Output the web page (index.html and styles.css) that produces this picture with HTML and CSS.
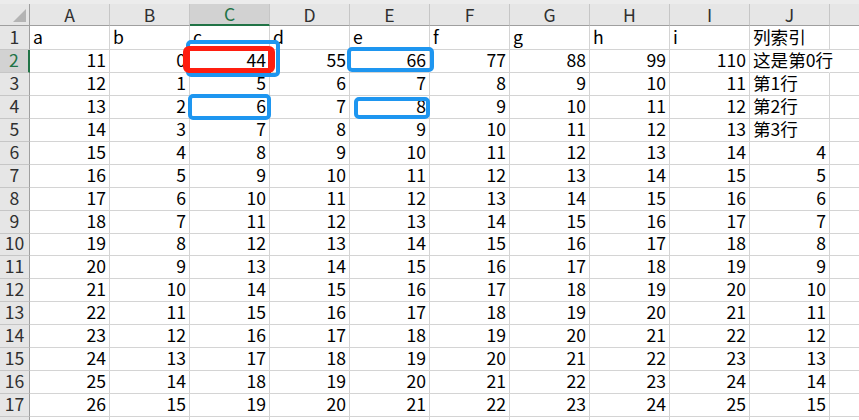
FILE: index.html
```html
<!DOCTYPE html>
<html lang="zh-CN">
<head>
<meta charset="utf-8">
<title>Sheet</title>
<link rel="stylesheet" href="styles.css">
</head>
<body>
<div class="sheet">
  <div class="strip"></div>

  <div class="corner"><span class="tri"></span></div>
  <div class="ch">A</div><div class="ch">B</div><div class="ch hs">C</div><div class="ch">D</div><div class="ch">E</div><div class="ch">F</div><div class="ch">G</div><div class="ch">H</div><div class="ch">I</div><div class="ch">J</div><div class="ch"></div>

  <div class="rh">1</div>
  <div class="c">a</div><div class="c">b</div><div class="c">c</div><div class="c">d</div><div class="c">e</div><div class="c">f</div><div class="c">g</div><div class="c">h</div><div class="c">i</div><div class="c">列索引</div><div class="c"></div>

  <div class="rh hs rsel">2</div>
  <div class="c n">11</div><div class="c n">0</div><div class="c n">44</div><div class="c n">55</div><div class="c n">66</div><div class="c n">77</div><div class="c n">88</div><div class="c n">99</div><div class="c n">110</div><div class="c ov">这是第0行</div><div class="c"></div>

  <div class="rh">3</div>
  <div class="c n">12</div><div class="c n">1</div><div class="c n">5</div><div class="c n">6</div><div class="c n">7</div><div class="c n">8</div><div class="c n">9</div><div class="c n">10</div><div class="c n">11</div><div class="c">第1行</div><div class="c"></div>

  <div class="rh">4</div>
  <div class="c n">13</div><div class="c n">2</div><div class="c n">6</div><div class="c n">7</div><div class="c n">8</div><div class="c n">9</div><div class="c n">10</div><div class="c n">11</div><div class="c n">12</div><div class="c">第2行</div><div class="c"></div>

  <div class="rh">5</div>
  <div class="c n">14</div><div class="c n">3</div><div class="c n">7</div><div class="c n">8</div><div class="c n">9</div><div class="c n">10</div><div class="c n">11</div><div class="c n">12</div><div class="c n">13</div><div class="c">第3行</div><div class="c"></div>

  <div class="rh">6</div>
  <div class="c n">15</div><div class="c n">4</div><div class="c n">8</div><div class="c n">9</div><div class="c n">10</div><div class="c n">11</div><div class="c n">12</div><div class="c n">13</div><div class="c n">14</div><div class="c n">4</div><div class="c"></div>

  <div class="rh">7</div>
  <div class="c n">16</div><div class="c n">5</div><div class="c n">9</div><div class="c n">10</div><div class="c n">11</div><div class="c n">12</div><div class="c n">13</div><div class="c n">14</div><div class="c n">15</div><div class="c n">5</div><div class="c"></div>

  <div class="rh">8</div>
  <div class="c n">17</div><div class="c n">6</div><div class="c n">10</div><div class="c n">11</div><div class="c n">12</div><div class="c n">13</div><div class="c n">14</div><div class="c n">15</div><div class="c n">16</div><div class="c n">6</div><div class="c"></div>

  <div class="rh">9</div>
  <div class="c n">18</div><div class="c n">7</div><div class="c n">11</div><div class="c n">12</div><div class="c n">13</div><div class="c n">14</div><div class="c n">15</div><div class="c n">16</div><div class="c n">17</div><div class="c n">7</div><div class="c"></div>

  <div class="rh">10</div>
  <div class="c n">19</div><div class="c n">8</div><div class="c n">12</div><div class="c n">13</div><div class="c n">14</div><div class="c n">15</div><div class="c n">16</div><div class="c n">17</div><div class="c n">18</div><div class="c n">8</div><div class="c"></div>

  <div class="rh">11</div>
  <div class="c n">20</div><div class="c n">9</div><div class="c n">13</div><div class="c n">14</div><div class="c n">15</div><div class="c n">16</div><div class="c n">17</div><div class="c n">18</div><div class="c n">19</div><div class="c n">9</div><div class="c"></div>

  <div class="rh">12</div>
  <div class="c n">21</div><div class="c n">10</div><div class="c n">14</div><div class="c n">15</div><div class="c n">16</div><div class="c n">17</div><div class="c n">18</div><div class="c n">19</div><div class="c n">20</div><div class="c n">10</div><div class="c"></div>

  <div class="rh">13</div>
  <div class="c n">22</div><div class="c n">11</div><div class="c n">15</div><div class="c n">16</div><div class="c n">17</div><div class="c n">18</div><div class="c n">19</div><div class="c n">20</div><div class="c n">21</div><div class="c n">11</div><div class="c"></div>

  <div class="rh">14</div>
  <div class="c n">23</div><div class="c n">12</div><div class="c n">16</div><div class="c n">17</div><div class="c n">18</div><div class="c n">19</div><div class="c n">20</div><div class="c n">21</div><div class="c n">22</div><div class="c n">12</div><div class="c"></div>

  <div class="rh">15</div>
  <div class="c n">24</div><div class="c n">13</div><div class="c n">17</div><div class="c n">18</div><div class="c n">19</div><div class="c n">20</div><div class="c n">21</div><div class="c n">22</div><div class="c n">23</div><div class="c n">13</div><div class="c"></div>

  <div class="rh">16</div>
  <div class="c n">25</div><div class="c n">14</div><div class="c n">18</div><div class="c n">19</div><div class="c n">20</div><div class="c n">21</div><div class="c n">22</div><div class="c n">23</div><div class="c n">24</div><div class="c n">14</div><div class="c"></div>

  <div class="rh">17</div>
  <div class="c n">26</div><div class="c n">15</div><div class="c n">19</div><div class="c n">20</div><div class="c n">21</div><div class="c n">22</div><div class="c n">23</div><div class="c n">24</div><div class="c n">25</div><div class="c n">15</div><div class="c"></div>

  <div class="rh last"></div>
  <div class="c"></div><div class="c"></div><div class="c"></div><div class="c"></div><div class="c"></div><div class="c"></div><div class="c"></div><div class="c"></div><div class="c"></div><div class="c"></div><div class="c"></div>

  <div class="active"><span class="handle"></span></div>
  <div class="mark blue b-c2"></div>
  <div class="mark red r-c2"></div>
  <div class="mark blue b-c4"></div>
  <div class="mark blue b-e2"></div>
  <div class="mark blue b-e4"></div>
</div>
</body>
</html>
```

FILE: styles.css
```css
html, body {
  margin: 0;
  padding: 0;
  background: #ffffff;
  overflow: hidden;
}

body {
  width: 859px;
  height: 420px;
}

.sheet {
  position: relative;
  display: grid;
  grid-template-columns: 30px repeat(11, 80px);
  grid-template-rows: 4px 22px 24px repeat(17, 22.94px);
  font-family: "Noto Sans CJK SC", "Noto Sans", sans-serif;
  font-size: 17.6px;
  color: #000000;
  width: 859px;
  height: 420px;
  overflow: hidden;
}

.strip {
  grid-column: 1 / -1;
  background: #ececec;
}

.corner {
  position: relative;
  background: #e6e6e6;
  border-right: 1px solid #9f9f9f;
  border-bottom: 1px solid #9f9f9f;
}

.tri {
  position: absolute;
  right: 3px;
  bottom: 3px;
  width: 0;
  height: 0;
  border-left: 13px solid transparent;
  border-bottom: 13px solid #b4b4b4;
}

.ch,
.rh,
.c {
  display: flex;
  align-items: flex-end;
  white-space: nowrap;
  box-sizing: border-box;
}

.ch {
  justify-content: center;
  line-height: 20px;
  background: #e6e6e6;
  color: #303030;
  border-right: 1px solid #c6c6c6;
  border-bottom: 1px solid #9f9f9f;
}

.rh {
  justify-content: center;
  line-height: 22px;
  background: #e6e6e6;
  color: #303030;
  border-right: 1px solid #9f9f9f;
  border-bottom: 1px solid #c6c6c6;
  padding-bottom: 1px;
}

.ch.hs {
  background: #d2d2d2;
  color: #217346;
  border-bottom: 2px solid #217346;
}

.rh.hs {
  background: #d2d2d2;
  color: #217346;
  border-right: 2px solid #217346;
}

.c {
  line-height: 22px;
  border-right: 1px solid #d4d4d4;
  border-bottom: 1px solid #d4d4d4;
  padding: 0 3px 1px 3px;
}

.n {
  justify-content: flex-end;
}

.ov {
  border-right-color: transparent;
  position: relative;
  z-index: 1;
}

.active {
  position: absolute;
  left: 188px;
  top: 48px;
  width: 82px;
  height: 25px;
  box-sizing: border-box;
  border: 2px solid #217346;
}

.handle {
  position: absolute;
  right: -4px;
  bottom: -4px;
  width: 6px;
  height: 6px;
  background: #217346;
  border: 1px solid #ffffff;
}

.mark {
  position: absolute;
  box-sizing: border-box;
  z-index: 2;
}

.blue {
  border: 4px solid #1e96f0;
  border-radius: 5px;
}

.red {
  border-style: solid;
  border-color: #ff1e10;
  border-width: 5px 7px;
  border-radius: 6px;
  z-index: 3;
}

.b-c2 { left: 186px; top: 40px; width: 94px; height: 37px; }
.r-c2 { left: 183px; top: 46px; width: 92px; height: 27px; }
.b-c4 { left: 188px; top: 94px; width: 83px; height: 26px; }
.b-e2 { left: 347px; top: 47px; width: 87px; height: 25px; }
.b-e4 { left: 354px; top: 97px; width: 76px; height: 22px; }
```
